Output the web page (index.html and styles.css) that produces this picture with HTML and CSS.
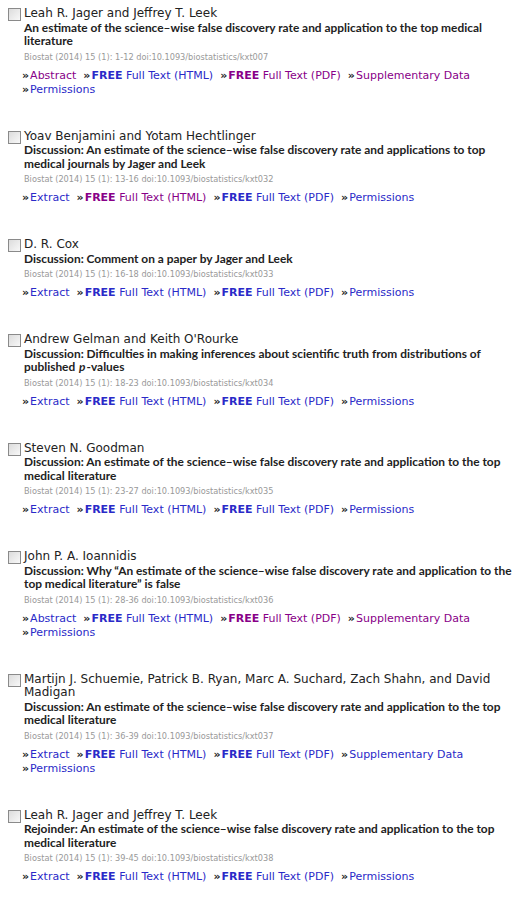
FILE: index.html
```html
<!DOCTYPE html>
<html>
<head>
<meta charset="utf-8">
<link rel="stylesheet" href="styles.css">
</head>
<body>
<div class="list">

<div class="entry">
  <span class="cb"></span>
  <div class="body">
    <div class="authors">Leah R. Jager and Jeffrey T. Leek</div>
    <div class="title">An estimate of the science–wise false discovery rate and application to the top medical literature</div>
    <div class="cite">Biostat (2014) 15 (1): 1-12 doi:10.1093/biostatistics/kxt007</div>
    <div class="links">
      <span class="lk"><a class="v">Abstract</a></span>
      <span class="lk"><a><b>FREE</b> Full Text (HTML)</a></span>
      <span class="lk"><a class="v"><b>FREE</b> Full Text (PDF)</a></span>
      <span class="lk"><a class="v">Supplementary Data</a></span>
      <span class="lk"><a>Permissions</a></span>
    </div>
  </div>
</div>

<div class="entry">
  <span class="cb"></span>
  <div class="body">
    <div class="authors">Yoav Benjamini and Yotam Hechtlinger</div>
    <div class="title">Discussion: An estimate of the science–wise false discovery rate and applications to top medical journals by Jager and Leek</div>
    <div class="cite">Biostat (2014) 15 (1): 13-16 doi:10.1093/biostatistics/kxt032</div>
    <div class="links">
      <span class="lk"><a>Extract</a></span>
      <span class="lk"><a class="v"><b>FREE</b> Full Text (HTML)</a></span>
      <span class="lk"><a><b>FREE</b> Full Text (PDF)</a></span>
      <span class="lk"><a>Permissions</a></span>
    </div>
  </div>
</div>

<div class="entry">
  <span class="cb"></span>
  <div class="body">
    <div class="authors">D. R. Cox</div>
    <div class="title">Discussion: Comment on a paper by Jager and Leek</div>
    <div class="cite">Biostat (2014) 15 (1): 16-18 doi:10.1093/biostatistics/kxt033</div>
    <div class="links">
      <span class="lk"><a>Extract</a></span>
      <span class="lk"><a><b>FREE</b> Full Text (HTML)</a></span>
      <span class="lk"><a><b>FREE</b> Full Text (PDF)</a></span>
      <span class="lk"><a>Permissions</a></span>
    </div>
  </div>
</div>

<div class="entry">
  <span class="cb"></span>
  <div class="body">
    <div class="authors">Andrew Gelman and Keith O'Rourke</div>
    <div class="title">Discussion: Difficulties in making inferences about scientific truth from distributions of published <i class="pv">p</i>-values</div>
    <div class="cite">Biostat (2014) 15 (1): 18-23 doi:10.1093/biostatistics/kxt034</div>
    <div class="links">
      <span class="lk"><a>Extract</a></span>
      <span class="lk"><a><b>FREE</b> Full Text (HTML)</a></span>
      <span class="lk"><a><b>FREE</b> Full Text (PDF)</a></span>
      <span class="lk"><a>Permissions</a></span>
    </div>
  </div>
</div>

<div class="entry">
  <span class="cb"></span>
  <div class="body">
    <div class="authors">Steven N. Goodman</div>
    <div class="title">Discussion: An estimate of the science–wise false discovery rate and application to the top medical literature</div>
    <div class="cite">Biostat (2014) 15 (1): 23-27 doi:10.1093/biostatistics/kxt035</div>
    <div class="links">
      <span class="lk"><a>Extract</a></span>
      <span class="lk"><a><b>FREE</b> Full Text (HTML)</a></span>
      <span class="lk"><a><b>FREE</b> Full Text (PDF)</a></span>
      <span class="lk"><a>Permissions</a></span>
    </div>
  </div>
</div>

<div class="entry">
  <span class="cb"></span>
  <div class="body">
    <div class="authors">John P. A. Ioannidis</div>
    <div class="title">Discussion: Why “An estimate of the science–wise false discovery rate and application to the top medical literature” is false</div>
    <div class="cite">Biostat (2014) 15 (1): 28-36 doi:10.1093/biostatistics/kxt036</div>
    <div class="links">
      <span class="lk"><a>Abstract</a></span>
      <span class="lk"><a><b>FREE</b> Full Text (HTML)</a></span>
      <span class="lk"><a class="v"><b>FREE</b> Full Text (PDF)</a></span>
      <span class="lk"><a class="v">Supplementary Data</a></span>
      <span class="lk"><a>Permissions</a></span>
    </div>
  </div>
</div>

<div class="entry">
  <span class="cb"></span>
  <div class="body">
    <div class="authors">Martijn J. Schuemie, Patrick B. Ryan, Marc A. Suchard, Zach Shahn, and David Madigan</div>
    <div class="title">Discussion: An estimate of the science–wise false discovery rate and application to the top medical literature</div>
    <div class="cite">Biostat (2014) 15 (1): 36-39 doi:10.1093/biostatistics/kxt037</div>
    <div class="links">
      <span class="lk"><a>Extract</a></span>
      <span class="lk"><a><b>FREE</b> Full Text (HTML)</a></span>
      <span class="lk"><a><b>FREE</b> Full Text (PDF)</a></span>
      <span class="lk"><a>Supplementary Data</a></span>
      <span class="lk"><a>Permissions</a></span>
    </div>
  </div>
</div>

<div class="entry">
  <span class="cb"></span>
  <div class="body">
    <div class="authors">Leah R. Jager and Jeffrey T. Leek</div>
    <div class="title">Rejoinder: An estimate of the science–wise false discovery rate and application to the top medical literature</div>
    <div class="cite">Biostat (2014) 15 (1): 39-45 doi:10.1093/biostatistics/kxt038</div>
    <div class="links">
      <span class="lk"><a>Extract</a></span>
      <span class="lk"><a><b>FREE</b> Full Text (HTML)</a></span>
      <span class="lk"><a><b>FREE</b> Full Text (PDF)</a></span>
      <span class="lk"><a>Permissions</a></span>
    </div>
  </div>
</div>

</div>
</body>
</html>
```

FILE: styles.css
```css
html, body {
  margin: 0;
  padding: 0;
  background: #ffffff;
}
body {
  font-family: "DejaVu Sans", Verdana, sans-serif;
  font-size: 11px;
  color: #222;
}
.list {
  padding: 7px 0 0 7px;
  display: flex;
  flex-direction: column;
  gap: 33px;
}
.entry {
  display: flex;
  align-items: flex-start;
}
.cb {
  flex: none;
  width: 11px;
  height: 11px;
  margin: 1px 3px 0 1px;
  border: 1px solid #8a8a8a;
  background: linear-gradient(135deg, #dcdcdc, #f8f8f8);
}
.body {
  flex: 1;
  min-width: 0;
}
.authors {
  font-size: 12px;
  line-height: 13.5px;
  color: #222;
}
.title {
  font-family: Lato, "Open Sans", sans-serif;
  font-weight: 700;
  font-size: 11.9px;
  line-height: 13.5px;
  color: #222;
}
.title .pv {
  font-style: italic;
  display: inline-block;
  padding: 0 1px 0 1px;
}
.cite {
  font-family: "DejaVu Sans", sans-serif;
  font-size: 8.2px;
  line-height: 10px;
  color: #999;
  margin-top: 4px;
}
.links {
  margin-top: 7px;
  margin-left: -2px;
  line-height: 14px;
  display: flex;
  flex-wrap: wrap;
  column-gap: 7px;
}
.lk {
  white-space: nowrap;
}
.lk::before {
  content: "»";
  font-weight: bold;
  color: #222;
  margin-right: 1px;
}
.lk a {
  color: #2a2ac8;
  text-decoration: none;
}
.lk a.v {
  color: #880088;
}
.lk a b {
  font-weight: bold;
}
```
